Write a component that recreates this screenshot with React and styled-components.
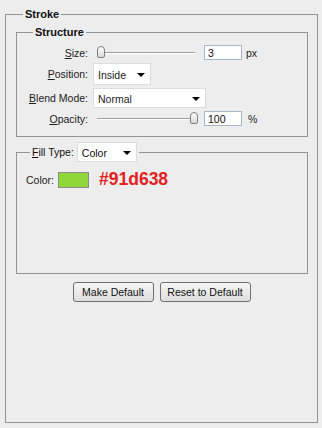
import React from 'react'
import styled, { createGlobalStyle } from 'styled-components'

const GlobalStyle = createGlobalStyle`
html, body {
    margin: 0;
    padding: 0;
    background: #ededed;
}
body {
    font-family: "Liberation Sans", Arial, sans-serif;
    font-size: 10.5px;
    color: #1c1c1c;
}
`

const Page = styled.div`
box-sizing: border-box;
height: 428px;
padding: 7px 4px 5px 5px;
display: flex;
flex-direction: column;
`

const Group = styled.fieldset`
margin: ${props => props.$margin || '0'};
padding: 0;
min-width: 0;
border: 1px solid #939393;
display: flex;
flex-direction: column;
flex: ${props => (props.$grow ? 1 : 'none')};
`

const Title = styled.legend`
margin-left: ${props => props.$indent}px;
padding: 0 2px;
font-weight: bold;
font-size: 11px;
line-height: 14px;
color: #111;
`

const LegendBar = styled.span`
display: flex;
align-items: center;
gap: 3px;
height: 20px;
font-weight: normal;
font-size: 10.5px;
`

const Rows = styled.div`
display: flex;
flex-direction: column;
gap: 3px;
padding: 6px 0 10px;
`

const Row = styled.div`
display: grid;
grid-template-columns: 71px auto;
column-gap: 5px;
align-items: center;
height: ${props => props.$h}px;
`

const Label = styled.span`
text-align: right;
white-space: nowrap;
`

const Controls = styled.div`
display: flex;
align-items: center;
`

const Select = styled.div`
box-sizing: border-box;
width: ${props => props.$w}px;
height: ${props => props.$h}px;
background: #fff;
border: 1px solid #dcdcdc;
display: flex;
align-items: center;
justify-content: space-between;
padding: 1px 5px 0 4px;
white-space: nowrap;
`

const Arrow = styled.span`
width: 0;
height: 0;
border-left: 4px solid transparent;
border-right: 4px solid transparent;
border-top: 4px solid #000;
`

const Slider = styled.div`
position: relative;
width: 102px;
height: 15px;
margin-left: 3px;
`

const Track = styled.div`
position: absolute;
left: 1px;
right: 3px;
top: 7px;
height: 1px;
background: #9c9c9c;
border-bottom: 1px solid #fff;
`

const Thumb = styled.div`
position: absolute;
top: 1px;
box-sizing: border-box;
width: 8px;
height: 12px;
border: 1px solid #7f7f7f;
border-radius: 4px 4px 2px 2px;
background: linear-gradient(#ffffff, #d9d9d9);
`

const NumberBox = styled.input`
box-sizing: border-box;
width: 38px;
height: 15px;
margin: 0 0 0 6px;
padding: 0 3px;
border: 1px solid #a8b7c8;
background: #fff;
font: inherit;
color: #111;
outline: none;
`

const Unit = styled.span`
margin-left: ${props => props.$gap}px;
`

const ColorRow = styled.div`
display: flex;
align-items: center;
height: 16px;
padding: 10px 0 85px 9px;
`

const Swatch = styled.div`
box-sizing: border-box;
width: 31px;
height: 16px;
margin-left: 4px;
background: ${props => props.$color};
border: 1px solid #8c8c8c;
`

const Hex = styled.span`
margin-left: 10px;
font-size: 17.5px;
font-weight: bold;
line-height: 1;
color: #e42121;
`

const Buttons = styled.div`
display: flex;
justify-content: center;
gap: 6px;
margin-top: 8px;
`

const Button = styled.button`
box-sizing: border-box;
width: ${props => props.$w}px;
height: 20px;
padding: 0;
border: 1px solid #707070;
border-radius: 3px;
background: linear-gradient(#f6f6f6, #dedede);
font: inherit;
color: #111;
`

const RangeSlider = ({ value, min, max }) => {
    const pct = (value - min) / (max - min)
    return (
        <Slider>
            <Track />
            <Thumb style={{ left: Math.round(pct * 94) }} />
        </Slider>
    )
}

const App = () => {
    return (
        <Page>
            <GlobalStyle />
            <Group $grow>
                <Title $indent={17}>Stroke</Title>
                <Group $margin="4px 9px 0 10px">
                    <Title $indent={16}>Structure</Title>
                    <Rows>
                        <Row $h={15}>
                            <Label><u>S</u>ize:</Label>
                            <Controls>
                                <RangeSlider value={3} min={1} max={250} />
                                <NumberBox readOnly value="3" />
                                <Unit $gap={4}>px</Unit>
                            </Controls>
                        </Row>
                        <Row $h={22}>
                            <Label><u>P</u>osition:</Label>
                            <Controls>
                                <Select $w={58} $h={22}>Inside<Arrow /></Select>
                            </Controls>
                        </Row>
                        <Row $h={20}>
                            <Label><u>B</u>lend Mode:</Label>
                            <Controls>
                                <Select $w={113} $h={20}>Normal<Arrow /></Select>
                            </Controls>
                        </Row>
                        <Row $h={15}>
                            <Label><u>O</u>pacity:</Label>
                            <Controls>
                                <RangeSlider value={100} min={0} max={100} />
                                <NumberBox readOnly value="100" />
                                <Unit $gap={6}>%</Unit>
                            </Controls>
                        </Row>
                    </Rows>
                </Group>
                <Group $margin="5px 9px 0 10px">
                    <Title $indent={13}>
                        <LegendBar>
                            <span><u>F</u>ill Type:</span>
                            <Select $w={60} $h={20}>Color<Arrow /></Select>
                        </LegendBar>
                    </Title>
                    <ColorRow>
                        <span>Color:</span>
                        <Swatch $color="#91d638" />
                        <Hex>#91d638</Hex>
                    </ColorRow>
                </Group>
                <Buttons>
                    <Button $w={81}>Make Default</Button>
                    <Button $w={91}>Reset to Default</Button>
                </Buttons>
            </Group>
        </Page>
    )
}

export default App
